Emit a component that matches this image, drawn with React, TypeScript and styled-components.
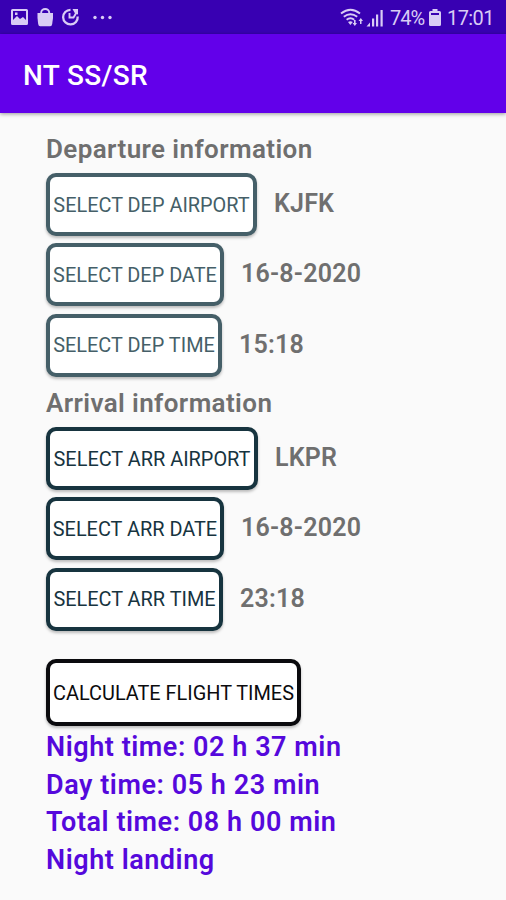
import React from 'react';
import styled, { createGlobalStyle } from 'styled-components';

const GlobalStyle = createGlobalStyle`
  * { box-sizing: border-box; }
  body {
    margin: 0;
    background: #fafafa;
    font-family: Roboto, "Liberation Sans", sans-serif;
  }
`;

const Screen = styled.div`
  width: 506px;
  height: 900px;
  overflow: hidden;
  background: #fafafa;
`;

const StatusBar = styled.div`
  display: flex;
  justify-content: space-between;
  height: 34px;
  padding: 0 12px 0 10px;
  background: #3800b2;
  color: #d9ccf5;
`;

const StatusIcons = styled.svg`
  display: block;
  flex: none;
  height: 34px;
`;

const StatusGroup = styled.div`
  display: flex;
  align-items: center;
`;

const StatusText = styled.span<{ $width: number; $tracking: number }>`
  width: ${(p) => p.$width}px;
  margin: 0 5px 0 6px;
  padding-top: 2px;
  font-size: 20px;
  letter-spacing: ${(p) => p.$tracking}px;
  line-height: 34px;
  white-space: nowrap;

  &:last-child { margin-right: 0; }
`;

const AppBar = styled.header`
  display: flex;
  align-items: center;
  height: 79px;
  padding: 3px 23px 0;
  background: #6200ea;
  box-shadow: 0 1px 4px rgba(0, 0, 0, 0.4);
`;

const Title = styled.h1`
  margin: 0;
  color: #fff;
  font-size: 28px;
  font-weight: 500;
  letter-spacing: 0.35px;
`;

const Content = styled.main`
  padding: 19px 46px 0;
`;

const Section = styled.section`
  height: 254px;
`;

const Heading = styled.h2`
  margin: 0;
  height: 41px;
  color: #6f6f6f;
  font-size: 26px;
  font-weight: 600;
  letter-spacing: 0.4px;
  line-height: 34px;
  white-space: nowrap;
`;

const Field = styled.div`
  display: flex;
  height: 63px;
  margin-bottom: 7.3px;
`;

const OutlineButton = styled.button<{ $color: string; $width: number; $height?: number }>`
  flex: none;
  width: ${(p) => p.$width}px;
  height: ${(p) => p.$height ?? 63}px;
  padding: 1px 0 0;
  border: 4px solid ${(p) => p.$color};
  border-radius: 10px;
  background: #fff;
  box-shadow: 0 2px 3px rgba(0, 0, 0, 0.25);
  color: ${(p) => p.$color};
  font-family: inherit;
  font-size: 19.9px;
  font-weight: 400;
  white-space: nowrap;
`;

const Actions = styled.div`
  padding-top: 19px;
`;

const Value = styled.span`
  margin-left: 17px;
  color: #6f6f6f;
  font-size: 25px;
  font-weight: 600;
  letter-spacing: 0.2px;
  line-height: 62px;
`;

const Results = styled.div`
  margin-top: 3px;
  color: #5508dc;
  font-size: 27px;
  font-weight: 600;
  letter-spacing: 0.55px;
  line-height: 37.6px;
  white-space: nowrap;
`;

const DEP = '#455f68';
const ARR = '#17343f';

const sections = [
  {
    title: 'Departure information',
    color: DEP,
    fields: [
      { label: 'SELECT DEP AIRPORT', width: 211, value: 'KJFK' },
      { label: 'SELECT DEP DATE', width: 178, value: '16-8-2020' },
      { label: 'SELECT DEP TIME', width: 176, value: '15:18' },
    ],
  },
  {
    title: 'Arrival information',
    color: ARR,
    fields: [
      { label: 'SELECT ARR AIRPORT', width: 212, value: 'LKPR' },
      { label: 'SELECT ARR DATE', width: 178, value: '16-8-2020' },
      { label: 'SELECT ARR TIME', width: 177, value: '23:18' },
    ],
  },
];

const results = [
  'Night time: 02 h 37 min',
  'Day time: 05 h 23 min',
  'Total time: 08 h 00 min',
  'Night landing',
];

function NotificationIcons() {
  return (
    <StatusIcons width="104" viewBox="10 0 104 34" fill="currentColor">
      <path
        fillRule="evenodd"
        d="M12.500 9h14a1.500 1.500 0 0 1 1.500 1.500v13a1.500 1.500 0 0 1-1.500 1.500h-14a1.500 1.500 0 0 1-1.500-1.500v-13A1.500 1.500 0 0 1 12.500 9zM13 11v9l4-4 3 3 3-2 3 3v-9zM15 12.500h2.500V15H15z"
      />
      <path d="M37.500 13h15.500v5l-.8 6q-.3 2.200-2 2.200h-10q-1.700 0-2-2.200l-.7-6z" />
      <path d="M41.200 14v-1.500a4 3.500 0 0 1 8 0V14" fill="none" stroke="currentColor" strokeWidth="1.900" />
      <path d="M70.500 9.800A7.300 7.300 0 1 0 77.700 16.500" fill="none" stroke="currentColor" strokeWidth="2.300" />
      <path d="M69.500 13v4.500h4l3-5" fill="none" stroke="currentColor" strokeWidth="1.900" />
      <path d="M72.500 9H78v5.500l-3-1z" />
      <circle cx="95" cy="17.500" r="1.700" />
      <circle cx="102.500" cy="17.500" r="1.700" />
      <circle cx="110" cy="17.500" r="1.700" />
    </StatusIcons>
  );
}

function SignalIcons() {
  return (
    <StatusIcons width="44" viewBox="341 0 44 34" fill="currentColor">
      <g fill="none" stroke="currentColor" strokeWidth="1.900">
        <path d="M342 13.500q9.500-7.500 19 0" />
        <path d="M344.800 16.800q6.700-5.300 13.400 0" />
        <path d="M347.600 19.800q3.900-3 7.600 0" />
      </g>
      <path d="M349 22q2.400-1.700 4.800 0L351.400 25z" />
      <path d="M355 20h1.600v3h1.400l-2.200 3-2.200-3H355zM362.500 24H361v-3h-1.500l2.300-3 2.200 3h-1.500z" />
      <path d="M367.500 26.500h3.500v-4z" />
      <path d="M373 18.500h2.200v8H373zM377 14.500h2.200v12H377zM381.500 10h2.200v16.500h-2.200z" />
    </StatusIcons>
  );
}

function BatteryIcon() {
  return (
    <StatusIcons width="12" viewBox="430 0 12 34" fill="currentColor">
      <path
        fillRule="evenodd"
        d="M433.500 9h5v2h2q1.500 0 1.500 1.500v12q0 1.500-1.500 1.500h-9q-1.500 0-1.500-1.500v-12q0-1.500 1.500-1.500h2zM432 13v2h8v-2z"
      />
    </StatusIcons>
  );
}

export default function App() {
  return (
    <Screen>
      <GlobalStyle />
      <StatusBar>
        <NotificationIcons />
        <StatusGroup>
          <SignalIcons />
          <StatusText $width={34} $tracking={-1}>74%</StatusText>
          <BatteryIcon />
          <StatusText $width={47} $tracking={-0.6}>17:01</StatusText>
        </StatusGroup>
      </StatusBar>
      <AppBar>
        <Title>NT SS/SR</Title>
      </AppBar>
      <Content>
        {sections.map((s) => (
          <Section key={s.title}>
            <Heading>{s.title}</Heading>
            {s.fields.map((f) => (
              <Field key={f.label}>
                <OutlineButton $color={s.color} $width={f.width}>{f.label}</OutlineButton>
                <Value>{f.value}</Value>
              </Field>
            ))}
          </Section>
        ))}
        <Actions>
          <OutlineButton $color="#0b0b0e" $width={255} $height={67}>CALCULATE FLIGHT TIMES</OutlineButton>
        </Actions>
        <Results>
          {results.map((r) => (
            <div key={r}>{r}</div>
          ))}
        </Results>
      </Content>
    </Screen>
  );
}
